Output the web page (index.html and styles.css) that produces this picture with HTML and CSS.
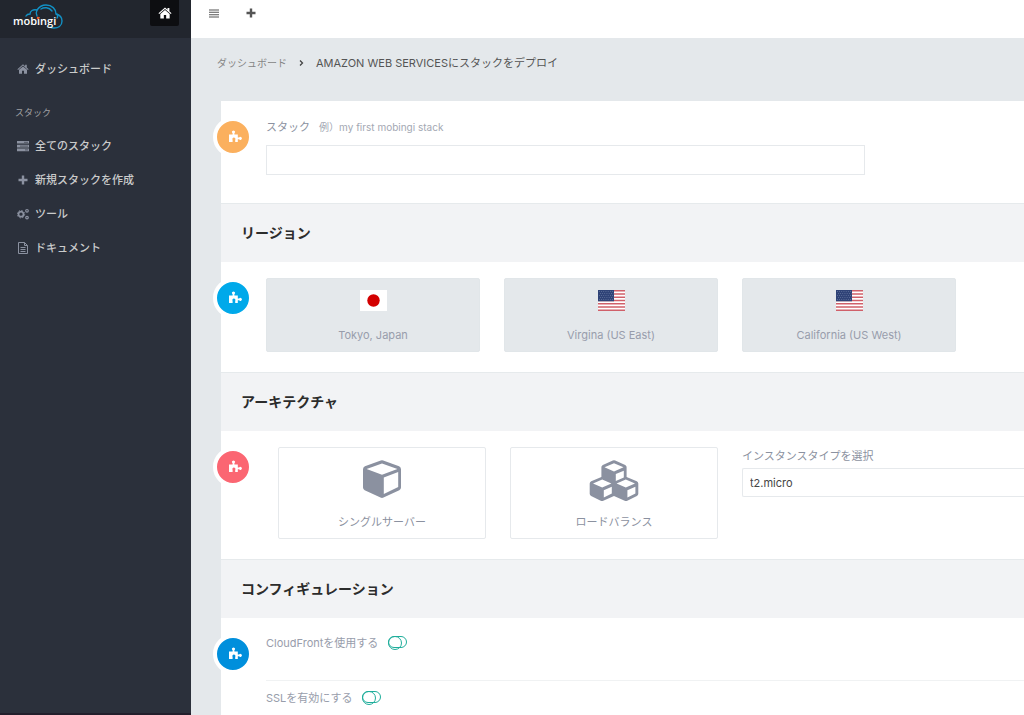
FILE: index.html
```
<!DOCTYPE html>
<html lang="ja">
<head>
    <meta charset="UTF-8">
    <meta name="viewport" content="width=device-width, initial-scale=1.0">
    <title>mobingi</title>
    <link rel="stylesheet" href="styles.css">
</head>
<body>
    <!-- shared icons -->
    <svg class="sprite" aria-hidden="true">
        <symbol id="home" viewBox="0 0 24 24">
            <path d="M12 2.5 0.8 12.3l1.3 1.5L12 5.2l9.9 8.6 1.3-1.5-3.7-3.3V3.5h-3.2v2.8z"/>
            <path d="M12 6.8 4 13.7V21.5h6v-6h4v6h6v-7.8z"/>
        </symbol>
        <symbol id="plus" viewBox="0 0 10 10">
            <path d="M3.8 0.5h2.4v3.3h3.3v2.4H6.2v3.3H3.8V6.2H.5V3.8h3.3z"/>
        </symbol>
        <symbol id="puzzle" viewBox="0 0 14 13">
            <path d="M1 4.500h3.600V3.200a1.500 1.500 0 1 1 1.800 0v1.300h3.400v3h1.300a1.500 1.500 0 1 1 0 1.800H9.800V12H7.200V9.700a1.500 1.500 0 1 0-2.600 0V12H1z"/>
        </symbol>
        <symbol id="us-flag" viewBox="0 0 27 21">
            <path fill="#fff" d="M0 0h27v21H0z"/>
            <path stroke="#d0606a" stroke-width="1.600" d="M0 .8h27M0 4h27M0 7.200h27M0 10.500h27M0 13.700h27M0 17h27M0 20.200h27"/>
            <path fill="#2f4377" d="M0 0h16v11.300H0z"/>
            <path stroke="#8391b5" stroke-width=".7" stroke-dasharray=".7 1.500" d="M1 1.500h14.500M2 3.500h13.500M1 5.500h14.500M2 7.500h13.500M1 9.500h14.500"/>
        </symbol>
        <symbol id="cube" viewBox="0 0 38 38">
            <path fill-rule="evenodd" d="M17.800.4q1.200-.5 2.400 0l15.900 5.800Q38 7 38 9.200v18.300q0 1.800-1.700 2.700L20.500 37.600q-1.500.7-3 0L1.700 30.200Q0 29.300 0 27.500V9.200Q0 7 1.900 6.200zM19 3.400 3.600 9 19 14.700 34.400 9zM20.800 17.400v16.500L35.200 27V12z"/>
        </symbol>
    </svg>

    <div class="layout">
        <aside class="sidebar">
            <div class="brand">
                <a class="logo" href="#" aria-label="mobingi">
                    <svg viewBox="0 0 52 26" width="52" height="26">
                        <g fill="none" stroke="#1290c4" stroke-width="1.400" stroke-linecap="round">
                            <path d="M14 12c1-2 2-2 4-2 0-3 3-5 7-4 2-3 5-5 9-5 6 0 10 4 10 9 4 1 6 4 6 7 0 5-4 7-8 7-2 0-3 0-4-1"/>
                            <path d="M25 12c-1-2-1-4 0-6M29 5c3-2 8-2 11 2M45 10c1 2 1 3 0 4"/>
                        </g>
                        <text class="logo-text" x="1" y="21">mobingi</text>
                        <circle cx="26" cy="14" r="1.200" fill="#f05a28"/>
                    </svg>
                </a>
                <a class="home-link" href="#" aria-label="ホーム"><svg width="14" height="14"><use href="#home"/></svg></a>
            </div>
            <nav class="menu">
                <a href="#"><svg width="12" height="12"><use href="#home"/></svg>ダッシュボード</a>
                <h2>スタック</h2>
                <a href="#"><svg width="12" height="12" viewBox="0 0 12 12"><path d="M0 1h12v2.600H0zM0 4.800h12v2.600H0zM0 8.600h12v2.600H0z"/><path stroke="#2b303b" stroke-width=".6" d="M7 2.300h4M3 6.100h8M8 9.900h3"/></svg>全てのスタック</a>
                <a href="#"><svg width="12" height="10"><use href="#plus"/></svg>新規スタックを作成</a>
                <a href="#">
                    <svg width="12" height="12" viewBox="0 0 12 12" class="line">
                        <circle cx="4" cy="6.200" r="2.500" stroke-width="1.700"/>
                        <circle cx="4" cy="6.200" r="3.700" stroke-width="1" stroke-dasharray="1.400 1.500"/>
                        <circle cx="10" cy="2.800" r="1.300" stroke-width="1.200"/>
                        <circle cx="10" cy="9.600" r="1.300" stroke-width="1.200"/>
                    </svg>ツール</a>
                <a href="#">
                    <svg width="12" height="12" viewBox="0 0 12 12" class="line">
                        <path d="M1.500.5h6l3 3v8h-9zM7.500.5v3h3M3.500 5.500h5M3.500 7.500h5M3.500 9.500h5"/>
                    </svg>ドキュメント</a>
            </nav>
        </aside>

        <main class="main">
            <header class="topbar">
                <button type="button" aria-label="メニュー"><svg width="10" height="9" viewBox="0 0 10 9"><path d="M0 .5h10v1H0zM0 2.800h10v1H0zM0 5.200h10v1H0zM0 7.500h10v1H0z"/></svg></button>
                <button type="button" aria-label="追加"><svg width="10" height="10"><use href="#plus"/></svg></button>
            </header>

            <nav class="breadcrumb">
                <a href="#">ダッシュボード</a>
                <svg width="5" height="8" viewBox="0 0 5 8"><path d="M1 1.500 3.500 4 1 6.500" fill="none" stroke="#444" stroke-width="1.300"/></svg>
                <span>AMAZON WEB SERVICESにスタックをデプロイ</span>
            </nav>

            <form class="panel">
                <section class="step">
                    <span class="badge orange"><svg width="14" height="13"><use href="#puzzle"/></svg></span>
                    <label class="stack-label" for="stackName">スタック <small>例）my first mobingi stack</small></label>
                    <input class="stack-input" type="text" id="stackName">
                </section>

                <h3>リージョン</h3>
                <section class="step">
                    <span class="badge sky"><svg width="14" height="13"><use href="#puzzle"/></svg></span>
                    <div class="regions">
                        <button type="button" class="region">
                            <svg width="27" height="21" viewBox="0 0 27 21"><path fill="#fff" d="M0 0h27v21H0z"/><circle cx="13.500" cy="10.500" r="6.200" fill="#d30000"/></svg>
                            Tokyo, Japan
                        </button>
                        <button type="button" class="region"><svg width="27" height="21"><use href="#us-flag"/></svg>Virgina (US East)</button>
                        <button type="button" class="region"><svg width="27" height="21"><use href="#us-flag"/></svg>California (US West)</button>
                    </div>
                </section>

                <h3>アーキテクチャ</h3>
                <section class="step">
                    <span class="badge red"><svg width="14" height="13"><use href="#puzzle"/></svg></span>
                    <div class="archs">
                        <button type="button" class="arch"><svg width="38" height="38"><use href="#cube"/></svg>シングルサーバー</button>
                        <button type="button" class="arch">
                            <svg width="50" height="42" viewBox="0 0 50 42">
                                <path fill-rule="evenodd" d="M23.800.6q1.200-.6 2.400 0l10 4.300q1.400.7 1.400 2.200v9.800l10.200 4.400q1.500.7 1.500 2.200v10.300q0 1.500-1.400 2.200l-9.600 4.800q-1.300.6-2.600 0L25 36l-10.700 4.800q-1.300.6-2.600 0l-9.600-4.800Q.7 35.300.7 33.800V23.500q0-1.500 1.500-2.200l10.200-4.400V7.100q0-1.500 1.400-2.200zM25 3.200 15.500 7.300 25 11.400l9.500-4.100zM26.800 14v7l8-3.500v-6.800zM13.200 19.500 4 23.500l9.200 4 9.200-4zM14.800 30.200v7.300l8-4v-6.800zM36.800 19.500l-9.200 4 9.200 4 9.200-4zM38.400 30.200v7.300l8-4v-6.800z"/>
                            </svg>
                            ロードバランス
                        </button>
                        <div class="instance">
                            <label for="instanceType">インスタンスタイプを選択</label>
                            <select id="instanceType"><option>t2.micro</option></select>
                        </div>
                    </div>
                </section>

                <h3>コンフィギュレーション</h3>
                <section class="step config">
                    <span class="badge blue"><svg width="14" height="13"><use href="#puzzle"/></svg></span>
                    <label class="option">CloudFrontを使用する <input type="checkbox" class="toggle"></label>
                    <label class="option">SSLを有効にする <input type="checkbox" class="toggle"></label>
                </section>
            </form>
        </main>
    </div>
</body>
</html>
```
FILE: styles.css
```
* {
    box-sizing: border-box;
}

body {
    margin: 0;
    font-family: Inter, "Noto Sans CJK JP", sans-serif;
    font-size: 11px;
    line-height: 16px;
    color: #8b91a0;
    background: #e4e8eb;
}

a {
    color: inherit;
    text-decoration: none;
}

button,
input,
select {
    margin: 0;
    font: inherit;
    color: inherit;
}

svg {
    fill: currentColor;
    flex: none;
}

.sprite {
    position: absolute;
    width: 0;
    height: 0;
}

.line {
    fill: none;
    stroke: currentColor;
}

.layout {
    display: flex;
    height: 100vh;
    overflow: hidden;
}

/* Sidebar */
.sidebar {
    flex: 0 0 191px;
    background: #2b303b;
    border-bottom: 2px solid #221e2b;
}

.brand {
    display: flex;
    justify-content: space-between;
    align-items: flex-start;
    height: 38px;
    padding: 0 12px;
    background: #22262e;
}

.logo svg {
    display: block;
    margin-top: 4px;
}

.logo-text {
    font-family: "Open Sans", sans-serif;
    font-size: 11px;
    font-weight: 600;
    fill: #fff;
}

.home-link {
    display: flex;
    justify-content: center;
    align-items: center;
    width: 29px;
    height: 26px;
    border-radius: 0 0 2px 2px;
    background: #0d0e11;
    color: #fff;
}

.menu {
    padding: 14px 17px;
}

.menu a {
    display: flex;
    align-items: center;
    gap: 6px;
    height: 34px;
    font-size: 11px;
    font-weight: 500;
    color: #cacbcb;
}

.menu svg {
    color: #8b91a0;
}

.menu h2 {
    margin: 20px 0 9px -2px;
    font-size: 9px;
    font-weight: 400;
    line-height: 14px;
    color: #a0a1a4;
}

/* Main column */
.main {
    flex: 1;
    min-width: 0;
    overflow: hidden;
}

.topbar {
    display: flex;
    gap: 20px;
    height: 38px;
    padding: 4px 14px;
    background: #fff;
}

.topbar button {
    display: flex;
    justify-content: center;
    align-items: center;
    width: 17px;
    height: 18px;
    padding: 0;
    border: 0;
    background: none;
    color: #555;
}

.breadcrumb {
    display: flex;
    align-items: center;
    gap: 12px;
    padding: 17px 26px 30px;
    font-size: 11px;
    color: #555;
}

.breadcrumb a {
    font-size: 10px;
    color: #858585;
}

.panel {
    margin-left: 30px;
    background: #fff;
}

.panel h3 {
    margin: 0;
    padding: 17px 20px;
    border-top: 1px solid #e6eaec;
    background: #f2f3f5;
    font-size: 14px;
    font-weight: 700;
    line-height: 24px;
    color: #2c2c2c;
}

.step {
    position: relative;
    padding: 16px 0 20px 45px;
}

.badge {
    position: absolute;
    top: 16px;
    left: -8px;
    display: flex;
    justify-content: center;
    align-items: center;
    width: 40px;
    height: 40px;
    padding: 0 0 2px 4px;
    border: 4px solid #fff;
    border-radius: 50%;
    color: #fff;
}

.orange { background: #fbb05e; }
.sky { background: #00a9ea; }
.red { background: #fb6672; }
.blue { background: #008fdc; }

.stack-label {
    display: block;
    margin: 2px 0 10px;
}

.stack-label small {
    margin-left: 6px;
    font-size: 10px;
    color: #a3a8b3;
}

.stack-input {
    display: block;
    width: 79%;
    height: 30px;
    margin-bottom: 8px;
    padding: 0 8px;
    border: 1px solid #e6e9ec;
}

/* Region and server choices */
.regions {
    display: grid;
    grid-template-columns: repeat(3, 1fr);
    gap: 24px;
    padding-right: 68px;
}

.region,
.arch {
    display: flex;
    flex-direction: column;
    align-items: center;
    border-radius: 2px;
}

.region {
    gap: 16px;
    height: 74px;
    padding: 11px 0 0;
    border: 1px solid #e1e6e9;
    background: #e4e8eb;
    color: #989dab;
}

.archs {
    display: grid;
    grid-template-columns: 208px 208px 1fr;
    gap: 24px;
    padding-left: 12px;
}

.arch {
    justify-content: space-between;
    height: 92px;
    padding: 12px 0 8px;
    border: 1px solid #e6e9ec;
    background: #fff;
}

.instance label {
    display: block;
    margin: 1px 0 4px;
}

.instance select {
    display: block;
    width: 100%;
    height: 29px;
    padding: 0 7px;
    border: 1px solid #e6e9ec;
    border-right: 0;
    border-radius: 2px 0 0 2px;
    background: #fff;
    color: #444;
    appearance: none;
}

/* Options */
.config {
    padding: 8px 0;
}

.option {
    display: flex;
    align-items: flex-start;
    gap: 10px;
    height: 54px;
    margin-left: 45px;
    padding-top: 9px;
    color: #989dab;
}

.option + .option {
    border-top: 1px solid #f0f2f3;
}

.toggle {
    position: relative;
    width: 19px;
    height: 12px;
    margin-top: 1px;
    border: 1px solid #1fae9b;
    border-radius: 6px;
    appearance: none;
}

.toggle::before {
    content: '';
    position: absolute;
    top: -1px;
    left: -1px;
    width: 12px;
    height: 12px;
    border: 1px solid #1fae9b;
    border-radius: 50%;
}

.toggle:checked::before {
    left: 6px;
}
```
